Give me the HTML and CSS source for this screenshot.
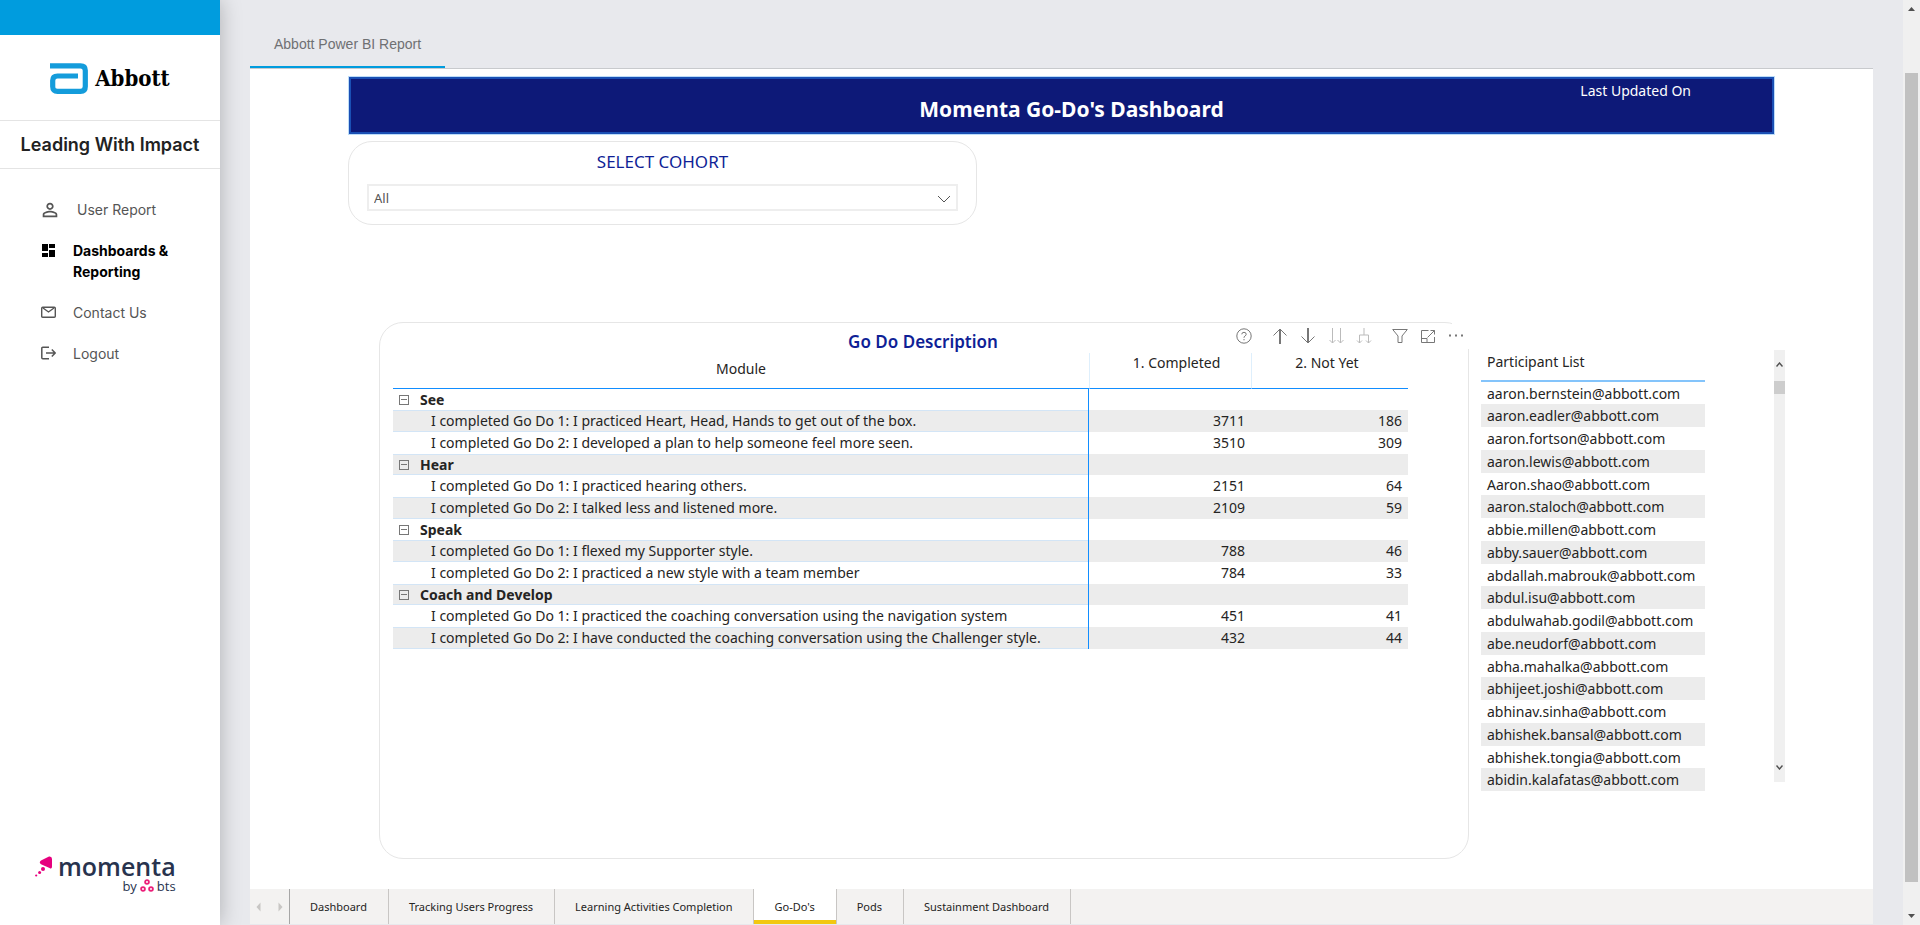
FILE: index.html
```html
<!DOCTYPE html>
<html lang="en">
<head>
<meta charset="utf-8">
<title>Abbott Power BI Report</title>
<link rel="stylesheet" href="styles.css">
</head>
<body>
<div class="app">
  <aside class="sidebar">
    <div class="sidebar-accent"></div>
    <div class="brand">
      <svg class="brand-mark" width="38" height="31" viewBox="0 0 38 31" aria-hidden="true"><path d="M0 2.8H30.500Q35.300 2.800 35.300 7.500V23.500Q35.300 28.300 30.500 28.300H7.500Q2.700 28.300 2.700 23.500V17.500Q2.700 13 7.500 13H28" fill="none" stroke="#149cdb" stroke-width="5.200"/></svg>
      <span class="brand-name">Abbott</span>
    </div>
    <h1 class="program">Leading With Impact</h1>
    <nav class="menu">
      <a class="menu-item menu-user" href="#">
        <svg class="menu-icon" width="22" height="21" viewBox="0 0 24 23" aria-hidden="true"><path fill="currentColor" d="M12 5.900c1.160 0 2.100.940 2.100 2.100s-.940 2.100-2.100 2.100S9.900 9.160 9.900 8s.940-2.100 2.100-2.100m0 9c2.970 0 6.100 1.460 6.100 2.100v1.100H5.900V17c0-.640 3.130-2.100 6.100-2.100M12 4C9.790 4 8 5.790 8 8s1.790 4 4 4 4-1.790 4-4-1.790-4-4-4zm0 9c-2.670 0-8 1.340-8 4v3h16v-3c0-2.660-5.330-4-8-4z"/></svg>
        User Report</a>
      <a class="menu-item active" href="#">
        <svg class="menu-icon" width="15" height="21" viewBox="0 0 15 21" aria-hidden="true"><path fill="currentColor" d="M1 4h6v7H1zM1 13h6v4H1zM8 4h6v4H8zM8 10h6v7H8z"/></svg>
        Dashboards &amp; Reporting</a>
      <a class="menu-item" href="#">
        <svg class="menu-icon" width="15" height="21" viewBox="0 0 15 21" aria-hidden="true"><path fill="none" stroke="currentColor" stroke-width="1.400" d="M1.700 5.200h11.600q1 0 1 1v8.100q0 1-1 1H1.700q-1 0-1-1V6.200q0-1 1-1zM2 6l5.500 4L13 6"/></svg>
        Contact Us</a>
      <a class="menu-item" href="#">
        <svg class="menu-icon" width="15" height="21" viewBox="0 0 15 21" aria-hidden="true"><path fill="none" stroke="currentColor" stroke-width="1.500" d="M8 4.300H1.800Q.800 4.300.800 5.300v9.500q0 1 1 1H8M5 10h9M10.800 6.500L14.200 10l-3.400 3.500"/></svg>
        Logout</a>
    </nav>
    <div class="momenta">
      <svg width="18" height="21" viewBox="0 0 18 21" aria-hidden="true"><g fill="#e6007e"><path d="M14 .500Q17 0 17 3V10.500Q17 13.500 14.500 12L6 8.300Q3.500 6.500 6 4.600z"/><circle cx="8" cy="13" r="2"/><circle cx="4.600" cy="16.500" r="1.500"/><circle cx="1.200" cy="19.500" r="1.100"/></g></svg>
      <div class="momenta-words">
        <span class="momenta-name">momenta</span>
        <span class="momenta-by">by
          <svg width="14" height="14" viewBox="0 0 14 14" aria-hidden="true"><g fill="none" stroke="#ec1e79" stroke-width="1.800"><circle cx="7" cy="3" r="1.900"/><circle cx="3" cy="10" r="1.900"/><circle cx="11" cy="10" r="1.900"/></g></svg>
          bts</span>
      </div>
    </div>
  </aside>

  <main class="main">
    <div class="page-tabs"><a class="page-tab" href="#">Abbott Power BI Report</a></div>
    <section class="report">
      <header class="banner">
        <h2 class="banner-title">Momenta Go-Do's Dashboard</h2>
        <span class="banner-updated">Last Updated On</span>
      </header>

      <div class="cohort">
        <label class="cohort-label" for="cohort">SELECT COHORT</label>
        <div class="cohort-field">
          <select id="cohort" class="cohort-select"><option>All</option></select>
          <svg class="cohort-chevron" width="14" height="8" viewBox="0 0 14 8" aria-hidden="true"><path d="M1 1l6 6 6-6" fill="none" stroke="#555" stroke-width="1"/></svg>
        </div>
      </div>

      <div class="visuals">
        <section class="card">
          <div class="toolbar">
            <button class="tool" aria-label="Help"><svg width="16" height="16" viewBox="0 0 16 16"><circle cx="8" cy="8" r="7.200"/><path d="M5.800 6.300Q5.800 4.300 8 4.300T10.200 6.300Q10.200 7.300 9 8T8 9.800M8 11v1.300"/></svg></button>
            <button class="tool tool-up" aria-label="Drill up"><svg width="16" height="16" viewBox="0 0 16 16"><path d="M1.500 7.500L8 1l6.500 6.500"/><path stroke-width="2" d="M8 1.500V16"/></svg></button>
            <button class="tool" aria-label="Drill down"><svg width="16" height="16" viewBox="0 0 16 16"><path d="M1.500 8.500L8 15l6.500-6.500"/><path stroke-width="2" d="M8 0v14.500"/></svg></button>
            <button class="tool faint" aria-label="Go to the next level"><svg width="16" height="16" viewBox="0 0 16 16"><path d="M4.500 0v15M1.500 12l3 3 3-3M12.500 0v15M9.500 12l3 3 3-3"/></svg></button>
            <button class="tool faint" aria-label="Expand all down one level"><svg width="16" height="16" viewBox="0 0 16 16"><path d="M8 0v7M3.500 15V7h9v8M1 12.500L3.500 15 6 12.500M10 12.500l2.500 2.500 2.500-2.500"/></svg></button>
            <button class="tool tool-filter" aria-label="Filters"><svg width="16" height="16" viewBox="0 0 16 16"><path d="M.700 1.500h14.600L10 8v6.500H6V8z"/></svg></button>
            <button class="tool" aria-label="Focus mode"><svg width="16" height="16" viewBox="0 0 16 16"><path d="M8.500 2.500h-7v12h13V9M1.500 10.500h5.500v4M7.500 9.500l7-7M10.500 2.500h4V6.500"/></svg></button>
            <button class="tool" aria-label="More options"><svg width="16" height="16" viewBox="0 0 16 16"><path stroke-width="2" d="M1 7.500h2M7 7.500h2M13 7.500h2"/></svg></button>
          </div>
          <h3 class="card-title">Go Do Description</h3>
          <table class="matrix">
            <thead><tr><th class="col-module">Module</th><th class="col-done">1. Completed</th><th class="col-todo">2. Not Yet</th></tr></thead>
            <tbody>
              <tr class="group"><th><button class="toggle" aria-label="Collapse See"></button>See</th><td></td><td></td></tr>
              <tr><th>I completed Go Do 1: I practiced Heart, Head, Hands to get out of the box.</th><td>3711</td><td>186</td></tr>
              <tr><th>I completed Go Do 2: I developed a plan to help someone feel more seen.</th><td>3510</td><td>309</td></tr>
              <tr class="group"><th><button class="toggle" aria-label="Collapse Hear"></button>Hear</th><td></td><td></td></tr>
              <tr><th>I completed Go Do 1: I practiced hearing others.</th><td>2151</td><td>64</td></tr>
              <tr><th>I completed Go Do 2: I talked less and listened more.</th><td>2109</td><td>59</td></tr>
              <tr class="group"><th><button class="toggle" aria-label="Collapse Speak"></button>Speak</th><td></td><td></td></tr>
              <tr><th>I completed Go Do 1: I flexed my Supporter style.</th><td>788</td><td>46</td></tr>
              <tr><th>I completed Go Do 2: I practiced a new style with a team member</th><td>784</td><td>33</td></tr>
              <tr class="group"><th><button class="toggle" aria-label="Collapse Coach and Develop"></button>Coach and Develop</th><td></td><td></td></tr>
              <tr><th>I completed Go Do 1: I practiced the coaching conversation using the navigation system</th><td>451</td><td>41</td></tr>
              <tr><th>I completed Go Do 2: I have conducted the coaching conversation using the Challenger style.</th><td>432</td><td>44</td></tr>
            </tbody>
          </table>
        </section>

        <section class="people">
          <table class="people-table">
            <thead><tr><th>Participant List</th></tr></thead>
            <tbody>
              <tr><td>aaron.bernstein@abbott.com</td></tr>
              <tr><td>aaron.eadler@abbott.com</td></tr>
              <tr><td>aaron.fortson@abbott.com</td></tr>
              <tr><td>aaron.lewis@abbott.com</td></tr>
              <tr><td>Aaron.shao@abbott.com</td></tr>
              <tr><td>aaron.staloch@abbott.com</td></tr>
              <tr><td>abbie.millen@abbott.com</td></tr>
              <tr><td>abby.sauer@abbott.com</td></tr>
              <tr><td>abdallah.mabrouk@abbott.com</td></tr>
              <tr><td>abdul.isu@abbott.com</td></tr>
              <tr><td>abdulwahab.godil@abbott.com</td></tr>
              <tr><td>abe.neudorf@abbott.com</td></tr>
              <tr><td>abha.mahalka@abbott.com</td></tr>
              <tr><td>abhijeet.joshi@abbott.com</td></tr>
              <tr><td>abhinav.sinha@abbott.com</td></tr>
              <tr><td>abhishek.bansal@abbott.com</td></tr>
              <tr><td>abhishek.tongia@abbott.com</td></tr>
              <tr><td>abidin.kalafatas@abbott.com</td></tr>
            </tbody>
          </table>
          <div class="list-scroll" aria-hidden="true">
            <svg width="7" height="5" viewBox="0 0 7 5"><path d="M.500 4.500l3-3.500 3 3.500" fill="none" stroke="#505050" stroke-width="1.400"/></svg>
            <div class="list-thumb"></div>
            <svg width="7" height="5" viewBox="0 0 7 5"><path d="M.500.500l3 3.500 3-3.500" fill="none" stroke="#505050" stroke-width="1.400"/></svg>
          </div>
        </section>
      </div>

      <nav class="sheets">
        <div class="sheet-arrows">
          <button class="sheet-arrow" aria-label="Previous page"><svg width="5" height="10" viewBox="0 0 5 10"><path d="M4.500.500v9L.500 5z" fill="#c8c6c4"/></svg></button>
          <button class="sheet-arrow" aria-label="Next page"><svg width="5" height="10" viewBox="0 0 5 10"><path d="M.500.500v9L4.500 5z" fill="#c8c6c4"/></svg></button>
        </div>
        <a class="sheet" href="#">Dashboard</a>
        <a class="sheet" href="#">Tracking Users Progress</a>
        <a class="sheet" href="#">Learning Activities Completion</a>
        <a class="sheet current" href="#">Go-Do's</a>
        <a class="sheet" href="#">Pods</a>
        <a class="sheet" href="#">Sustainment Dashboard</a>
      </nav>
    </section>
  </main>

  <div class="page-scroll" aria-hidden="true">
    <svg width="7" height="4" viewBox="0 0 7 4"><path d="M0 4h7L3.500 0z" fill="#505050"/></svg>
    <div class="page-thumb"></div>
    <svg width="7" height="4" viewBox="0 0 7 4"><path d="M0 0h7L3.500 4z" fill="#505050"/></svg>
  </div>
</div>
</body>
</html>
```
FILE: styles.css
```css
* { box-sizing: border-box; }
body { margin: 0; font-family: "Noto Sans", "Open Sans", sans-serif; font-size: 14px; color: #252423; background: #e8e9ed; }
a { color: inherit; text-decoration: none; }
button { border: 0; padding: 0; background: none; font: inherit; color: inherit; }
svg { display: block; flex: none; }
h1, h2, h3 { margin: 0; }

.app { display: flex; min-height: 100vh; }

/* Sidebar */
.sidebar { flex: none; display: flex; flex-direction: column; width: 220px; background: #fff; box-shadow: 0 0 20px rgba(0, 0, 0, .25); font-family: Inter, sans-serif; }
.sidebar-accent { height: 35px; background: #009cde; }
.brand { display: flex; align-items: center; justify-content: center; gap: 7px; height: 85px; padding-top: 2px; }
.brand-name { font: bold 22px/31px "DejaVu Serif Condensed", "Liberation Serif", serif; color: #000; }
.program { border: solid #e4e4e4; border-width: 1px 0; font-size: 18px; font-weight: 600; line-height: 47px; text-align: center; color: #222; }
.menu { display: flex; flex-direction: column; gap: 20px; padding: 30px 40px 0 41px; color: #555; line-height: 21px; }
.menu-item { display: flex; gap: 17px; }
.menu-user { gap: 16px; margin-left: -2px; }
.menu-item.active { color: #000; font-weight: 700; }
.momenta { display: flex; gap: 5px; margin-top: auto; padding: 0 0 29px 35px; font-family: "Open Sans", sans-serif; color: #28334e; }
.momenta-words { display: flex; flex-direction: column; }
.momenta-name { font-size: 25px; font-weight: 600; line-height: 20px; }
.momenta-by { display: flex; justify-content: flex-end; gap: 3px; font-size: 13px; line-height: 20px; }
.momenta-by svg { margin-top: 3px; }

/* Main column */
.main { flex: 1; min-width: 0; display: flex; flex-direction: column; padding: 20px 30px 1px; }
.page-tabs { display: flex; border-bottom: 1px solid #c8cacd; font-family: "Liberation Sans", Arial, sans-serif; color: #6f7073; }
.page-tab { padding: 2px 24px 0; border-bottom: 2px solid #009cde; line-height: 44px; }
.report { flex: 1; display: flex; flex-direction: column; background: #fff; }

.banner { display: grid; grid-template-columns: 1fr auto 1fr; height: 57px; margin: 8px 99px 0; border: 2px solid #1a4fb4; outline: 1px solid #bcdcf8; background: #0d1978; color: #fff; }
.banner-title { grid-column: 2; padding-left: 20px; font-size: 21px; font-weight: 700; line-height: 60px; }
.banner-updated { justify-self: end; margin-right: 81px; padding-top: 2px; font-size: 14px; line-height: 20px; }

.cohort { width: 44%; max-width: 629px; height: 84px; margin: 7px 98px 0; padding: 8px 18px 0; border: 1px solid #e6e6e6; border-radius: 24px; }
.cohort-label { display: block; text-align: center; font-size: 17px; line-height: 24px; color: #0f1f96; }
.cohort-field { position: relative; margin-top: 10px; }
.cohort-select { appearance: none; display: block; width: 100%; height: 27px; padding: 0 5px; border: 2px solid #eee; border-radius: 0; background: #fff; font: 13px "Noto Sans", sans-serif; color: #555; }
.cohort-chevron { position: absolute; right: 7px; top: 11px; pointer-events: none; }

.visuals { flex: 1; display: flex; gap: 12px; margin: 97px 88px 30px 129px; }
.card { position: relative; flex: 1; min-width: 0; padding: 8px 60px 20px 13px; border: 1px solid #e6e6e6; border-radius: 24px; }
.card-title { margin-right: -45px; text-align: center; font-size: 17px; font-weight: 600; line-height: 22px; color: #0f1f96; }
.toolbar { position: absolute; top: -1px; right: -2px; display: flex; align-items: center; gap: 12px; height: 27px; padding-right: 6px; background: linear-gradient(#fff, #fff) right / 18px 100% no-repeat; }
.tool { width: 16px; height: 16px; }
.tool svg { fill: none; stroke: #777; stroke-width: 1; }
.tool.faint svg { stroke: #bbb; }
.tool-up, .tool-filter { margin-left: 8px; }

table { border-collapse: separate; border-spacing: 0; }
th { font-weight: 400; }
th, td { padding: 0; white-space: nowrap; }
.matrix { width: 100%; line-height: 20px; }
.matrix thead th { height: 36px; border-bottom: 1px solid #118dff; }
.matrix thead .col-module { padding-bottom: 4px; }
.matrix thead .col-done { width: 162px; padding: 0 0 15px 12px; border-left: 1px solid #deeffc; }
.matrix thead .col-todo { width: 157px; padding: 0 6px 15px 0; border-left: 1px solid #deeffc; }
.matrix tbody tr { height: 22px; }
.matrix tbody .group { height: 21px; }
.matrix tbody th { padding-left: 38px; text-align: left; border-right: 1px solid #118dff; }
.matrix tbody td { padding-right: 6px; text-align: right; }
.matrix tbody tr:nth-child(even) { background: #ececec; }
.matrix tbody tr:nth-child(even) th { box-shadow: inset 0 1px #d3e5f6, inset 0 -1px #d3e5f6; }
.matrix .group th { padding-left: 6px; font-weight: 700; }
.toggle { display: inline-block; width: 10px; height: 10px; margin-right: 11px; border: 1px solid #777; background: linear-gradient(#777, #777) center / 6px 1px no-repeat; vertical-align: 1px; }

.people { flex: none; display: flex; justify-content: space-between; align-items: flex-start; width: 304px; margin-top: 28px; }
.people-table { width: 224px; line-height: 20px; }
.people-table th { height: 32px; padding: 0 6px 6px; border-bottom: 2px solid #84c4fb; text-align: left; }
.people-table td { height: 23px; padding: 1px 6px 0; }
.people-table tr:nth-child(4n+1) td { height: 22px; }
.people-table tbody tr:nth-child(even) { background: #ececec; }
.list-scroll { display: flex; flex-direction: column; align-items: center; width: 11px; height: 432px; padding: 12px 0; background: #f0f0f0; }
.list-thumb { width: 11px; height: 13px; margin: 14px 0 auto; background: #cdcdcd; }

.sheets { display: flex; height: 35px; background: #f3f2f1; font-size: 11px; line-height: 35px; }
.sheet-arrows { display: flex; align-items: center; gap: 17px; padding: 0 6px; border-right: 1px solid #a6a6a6; }
.sheet { padding: 0 21px 0 20px; border-right: 1px solid #c8c6c4; }
.sheet.current { background: #fff; box-shadow: inset 0 -4px #f2c811; }

/* Window scroll bar */
.page-scroll { flex: none; display: flex; flex-direction: column; align-items: center; width: 17px; padding: 7px 0; background: #f0f0f0; }
.page-thumb { flex: 1; width: 13px; margin: 62px 0 32px; background: #c1c1c1; }
```
